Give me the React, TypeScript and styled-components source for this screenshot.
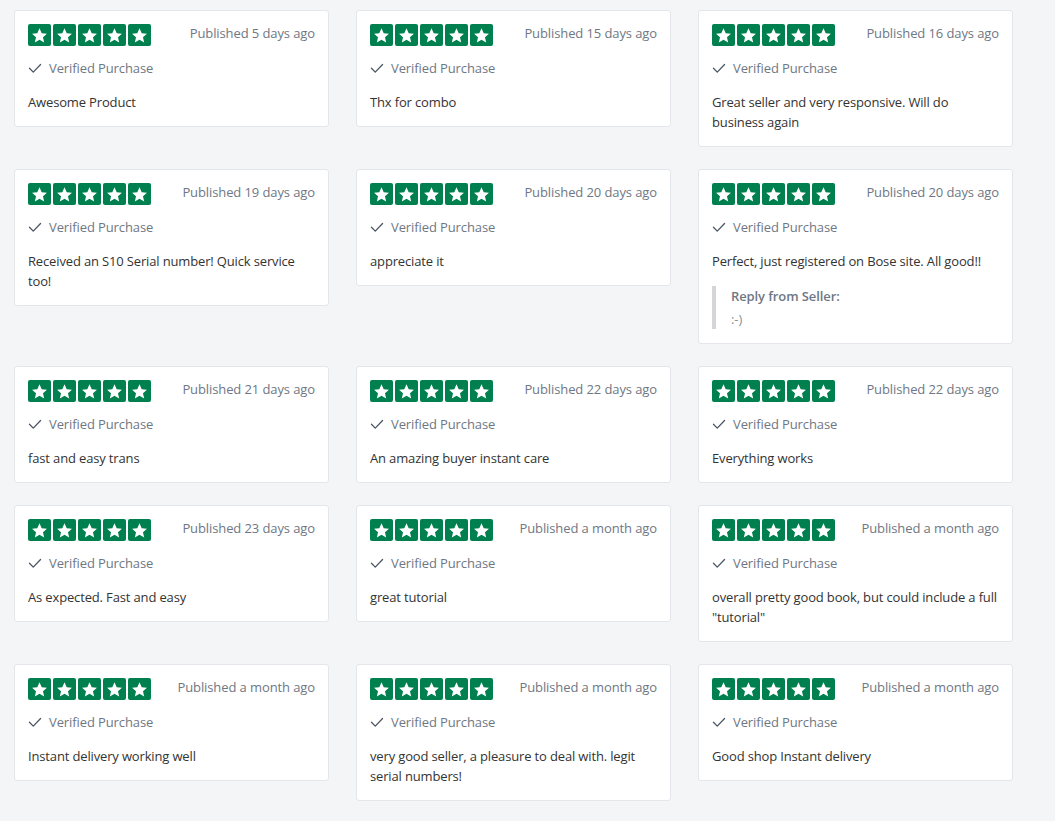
import React from "react";
import styled, { createGlobalStyle } from "styled-components";

type Review = {
	published: string;
	text: string;
	reply?: string;
};

const reviews: Review[] = [
	{ published: "Published 5 days ago", text: "Awesome Product" },
	{ published: "Published 15 days ago", text: "Thx for combo" },
	{ published: "Published 16 days ago", text: "Great seller and very responsive. Will do business again" },
	{ published: "Published 19 days ago", text: "Received an S10 Serial number! Quick service too!" },
	{ published: "Published 20 days ago", text: "appreciate it" },
	{ published: "Published 20 days ago", text: "Perfect, just registered on Bose site. All good!!", reply: ":-)" },
	{ published: "Published 21 days ago", text: "fast and easy trans" },
	{ published: "Published 22 days ago", text: "An amazing buyer instant care" },
	{ published: "Published 22 days ago", text: "Everything works" },
	{ published: "Published 23 days ago", text: "As expected. Fast and easy" },
	{ published: "Published a month ago", text: "great tutorial" },
	{ published: "Published a month ago", text: "overall pretty good book, but could include a full \"tutorial\"" },
	{ published: "Published a month ago", text: "Instant delivery working well" },
	{ published: "Published a month ago", text: "very good seller, a pleasure to deal with. legit serial numbers!" },
	{ published: "Published a month ago", text: "Good shop Instant delivery" },
];

function Star() {
	return (
		<StarBox>
			<svg width="17" height="17" viewBox="0 0 24 24">
				<path
					fill="#fff"
					d="M12 1.8l3.1 6.9 7.4.7-5.6 5 1.7 7.4L12 17.9l-6.6 3.9 1.7-7.4-5.6-5 7.4-.7z"
				/>
			</svg>
		</StarBox>
	);
}

function ReviewCard({ review }: { review: Review }) {
	return (
		<Card>
			<Header>
				<Stars>
					{[0, 1, 2, 3, 4].map((i) => (
						<Star key={i} />
					))}
				</Stars>
				<Published>{review.published}</Published>
			</Header>
			<Verified>
				<svg width="14" height="14" viewBox="0 0 24 24" fill="none">
					<path d="M2.5 12.5l6.5 6.5L21.5 6" stroke="#4b5563" strokeWidth="2.2" strokeLinecap="round" strokeLinejoin="round" />
				</svg>
				Verified Purchase
			</Verified>
			<Body>{review.text}</Body>
			{review.reply && (
				<Reply>
					<ReplyTitle>Reply from Seller:</ReplyTitle>
					<ReplyText>{review.reply}</ReplyText>
				</Reply>
			)}
		</Card>
	);
}

export default function App() {
	return (
		<>
			<GlobalStyle />
			<Page>
				<Grid>
					{reviews.map((r, i) => (
						<ReviewCard key={i} review={r} />
					))}
				</Grid>
			</Page>
		</>
	);
}

const GlobalStyle = createGlobalStyle`
	* { box-sizing: border-box; }
	body {
		margin: 0;
		background: #f4f5f7;
		font-family: "Open Sans", "Liberation Sans", sans-serif;
		letter-spacing: -0.1px;
	}
`;

const Page = styled.div`
	padding: 10px 14px;
`;

const Grid = styled.div`
	display: grid;
	grid-template-columns: repeat(3, 315px);
	column-gap: 27px;
	row-gap: 22px;
	align-items: start;
`;

const Card = styled.div`
	background: #fff;
	border: 1px solid #e3e6ea;
	border-radius: 3px;
	padding: 13px 13px 14px;
`;

const Header = styled.div`
	display: flex;
	justify-content: space-between;
	align-items: flex-start;
	height: 22px;
`;

const Stars = styled.div`
	display: flex;
	gap: 2px;
`;

const StarBox = styled.span`
	width: 23px;
	height: 22px;
	border-radius: 2px;
	background: #00804f;
	display: flex;
	align-items: center;
	justify-content: center;
`;

const Published = styled.span`
	font-size: 13px;
	line-height: 18px;
	color: #6f7784;
`;

const Verified = styled.div`
	display: flex;
	align-items: center;
	gap: 7px;
	margin-top: 12px;
	height: 20px;
	font-size: 13px;
	color: #6f7784;
`;

const Body = styled.p`
	margin: 14px -2px 0 0;
	font-size: 13px;
	line-height: 20px;
	letter-spacing: -0.15px;
	color: #333;
`;

const Reply = styled.div`
	margin-top: 15px;
	border-left: 4px solid #d3d5d8;
	padding: 0 0 0 15px;
`;

const ReplyTitle = styled.div`
	font-size: 13px;
	font-weight: 600;
	line-height: 20px;
	color: #6f7784;
`;

const ReplyText = styled.div`
	margin-top: 3px;
	font-size: 13px;
	line-height: 20px;
	color: #8a909a;
`;
